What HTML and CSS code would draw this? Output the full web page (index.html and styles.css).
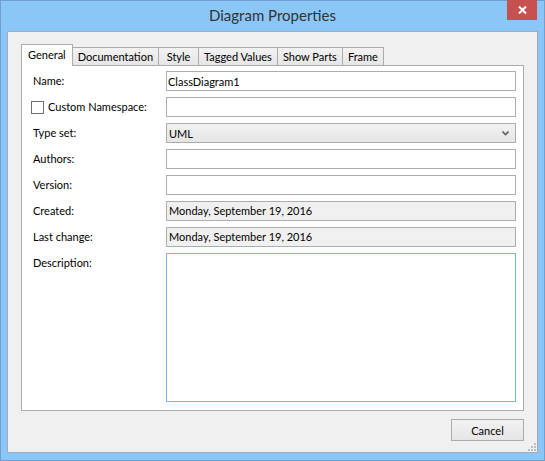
FILE: index.html
```html
<!DOCTYPE html>
<html lang="en">
<head>
    <meta charset="UTF-8">
    <meta name="viewport" content="width=device-width, initial-scale=1.0">
    <link rel="stylesheet" href="styles.css">
    <title>Diagram Properties</title>
</head>
<body>
    <div class="window">
        <div class="titlebar">
            <span></span>
            <div class="title">Diagram Properties</div>
            <div class="close">
                <svg width="9" height="8" viewBox="0 0 9 8"><path d="M1 0.5 L8 7.5 M8 0.5 L1 7.5" stroke="#fff" stroke-width="2"/></svg>
            </div>
        </div>

        <div class="client">
            <div class="tabs">
                <div class="tab active">General</div>
                <div class="tab">Documentation</div>
                <div class="tab">Style</div>
                <div class="tab">Tagged Values</div>
                <div class="tab">Show Parts</div>
                <div class="tab">Frame</div>
            </div>

            <div class="panel">
                <label class="lbl">Name:</label>
                <input type="text" class="field" value="ClassDiagram1">

                <label class="lbl check"><span class="box"></span>Custom Namespace:</label>
                <input type="text" class="field">

                <label class="lbl">Type set:</label>
                <div class="combo">
                    <span>UML</span>
                    <svg width="7" height="5" viewBox="0 0 7 5"><path d="M0.5 0.5 L3.5 3.5 L6.5 0.5" stroke="#606060" stroke-width="1.6" fill="none"/></svg>
                </div>

                <label class="lbl">Authors:</label>
                <input type="text" class="field">

                <label class="lbl">Version:</label>
                <input type="text" class="field">

                <label class="lbl">Created:</label>
                <div class="field readonly">Monday, September 19, 2016</div>

                <label class="lbl">Last change:</label>
                <div class="field readonly">Monday, September 19, 2016</div>

                <label class="lbl desc-lbl">Description:</label>
                <textarea class="desc"></textarea>
            </div>

            <div class="footer">
                <button class="cancel">Cancel</button>
            </div>

            <svg class="grip" width="8" height="8" viewBox="0 0 8 8">
                <rect x="6" y="0" width="2" height="2" fill="#bdbdbd"/>
                <rect x="3" y="3" width="2" height="2" fill="#bdbdbd"/>
                <rect x="6" y="3" width="2" height="2" fill="#bdbdbd"/>
                <rect x="0" y="6" width="2" height="2" fill="#bdbdbd"/>
                <rect x="3" y="6" width="2" height="2" fill="#bdbdbd"/>
                <rect x="6" y="6" width="2" height="2" fill="#bdbdbd"/>
            </svg>
        </div>
    </div>
</body>
</html>
```

FILE: styles.css
```css
*{
    margin:0px;
    padding:0px;
    box-sizing: border-box;
}
body{
    font-family: Lato, "Open Sans", sans-serif;
    font-size: 11px;
    color: #000;
}
.window{
    width: 545px;
    height: 461px;
    background-color: #8ac6f8;
    box-shadow: inset 0 0 0 1px #6f9fce;
    display: flex;
    flex-direction: column;
}
.titlebar{
    height: 31px;
    display: grid;
    grid-template-columns: 1fr auto 1fr;
}
.titlebar .title{
    font-size: 15px;
    line-height: 31px;
    color: #333;
}
.titlebar .close{
    justify-self: end;
    width: 30px;
    height: 20px;
    margin-right: 8px;
    background-color: #c75050;
    display: flex;
    align-items: center;
    justify-content: center;
}
.client{
    flex: 1;
    margin: 0 7px 8px 7px;
    background-color: #f0f0f0;
    border: 1px solid #a2abb7;
    padding: 12px 13px 0 13px;
    display: flex;
    flex-direction: column;
    position: relative;
}
.tabs{
    display: flex;
    height: 22px;
    margin-bottom: -1px;
    align-items: flex-start;
}
.tab{
    height: 18px;
    min-width: 41px;
    margin-top: 3px;
    margin-left: -1px;
    padding: 0 5px;
    border: 1px solid #acacac;
    border-bottom: none;
    background: linear-gradient(#f2f2f2, #e6e6e6);
    line-height: 17px;
    text-align: center;
    white-space: nowrap;
}
.tab.active{
    height: 22px;
    margin-top: 0;
    margin-left: 0;
    padding: 0 6px;
    background: #fff;
    line-height: 19px;
    position: relative;
    z-index: 1;
}
.panel{
    flex: 1;
    background-color: #fff;
    border: 1px solid #acacac;
    padding: 5px 7px 8px 11px;
    display: grid;
    grid-template-columns: 133px 350px;
    grid-template-rows: repeat(7, 20px) 1fr;
    row-gap: 6px;
}
.lbl{
    line-height: 20px;
    white-space: nowrap;
}
.lbl.check{
    display: flex;
    align-items: center;
    gap: 4px;
    margin-left: -2px;
}
.lbl.check .box{
    width: 13px;
    height: 13px;
    border: 1px solid #707070;
    background-color: #fff;
}
.field{
    height: 20px;
    width: 100%;
    border: 1px solid #abadb3;
    background-color: #fff;
    padding: 0 2px 0 1px;
    font-family: inherit;
    font-size: 11px;
    color: #000;
    outline: none;
}
.field.readonly{
    background-color: #f0f0f0;
    line-height: 18px;
    padding-left: 2px;
}
.combo{
    height: 20px;
    border: 1px solid #acacac;
    background: linear-gradient(#f2f2f2, #e5e5e5);
    padding: 0 6px 0 2px;
    display: flex;
    align-items: center;
    justify-content: space-between;
}
.desc{
    width: 100%;
    height: 100%;
    resize: none;
    border: 1px solid #7eb4ea;
    outline: none;
    font-family: inherit;
}
.footer{
    display: flex;
    justify-content: flex-end;
    padding: 8px 0 11px 0;
}
.cancel{
    width: 73px;
    height: 22px;
    border: 1px solid #acacac;
    background: linear-gradient(#f2f2f2, #e5e5e5);
    font-family: inherit;
    font-size: 11px;
    color: #000;
}
.grip{
    position: absolute;
    right: 1px;
    bottom: 1px;
}
```
